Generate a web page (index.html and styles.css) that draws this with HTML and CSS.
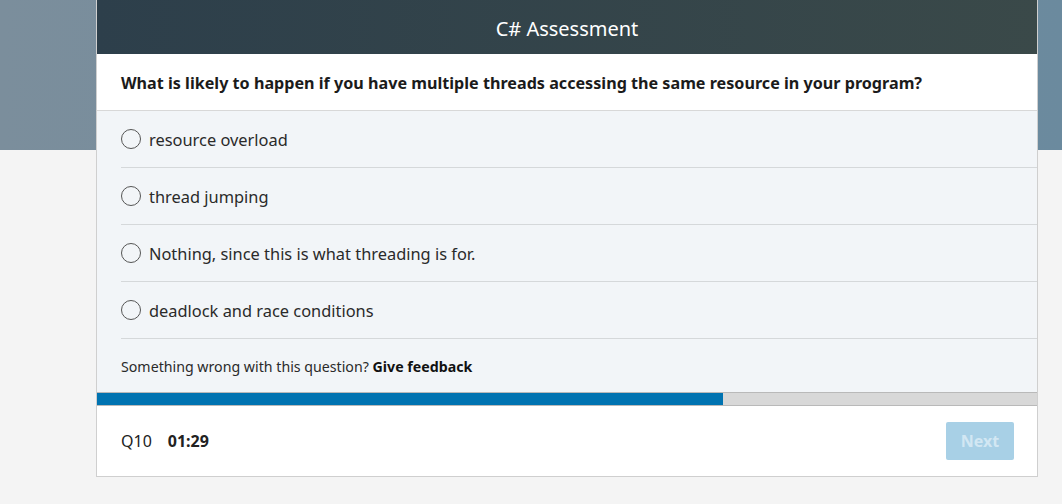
FILE: index.html
```html
<!DOCTYPE html>
<html lang="en">
<head>
<meta charset="utf-8">
<title>C# Assessment</title>
<link rel="stylesheet" href="styles.css">
</head>
<body>
<div class="band"></div>
<main class="card">
  <header class="card-head">C# Assessment</header>
  <div class="question">What is likely to happen if you have multiple threads accessing the same resource in your program?</div>
  <ul class="options">
    <li class="option"><span class="radio"></span><span class="label">resource overload</span></li>
    <li class="option"><span class="radio"></span><span class="label">thread jumping</span></li>
    <li class="option"><span class="radio"></span><span class="label">Nothing, since this is what threading is for.</span></li>
    <li class="option"><span class="radio"></span><span class="label">deadlock and race conditions</span></li>
  </ul>
  <div class="feedback">Something wrong with this question? <b>Give feedback</b></div>
  <div class="progress"><div class="progress-fill" style="width: 66.6%"></div></div>
  <footer class="card-foot">
    <span class="qnum">Q10</span>
    <span class="timer">01:29</span>
    <button class="next" disabled>Next</button>
  </footer>
</main>
</body>
</html>
```

FILE: styles.css
```css
html, body {
  margin: 0;
  padding: 0;
}
body {
  background: #f4f4f4;
  font-family: "Noto Sans", "Open Sans", sans-serif;
  color: #222;
  width: 1062px;
  height: 504px;
  overflow: hidden;
  position: relative;
}
.band {
  position: absolute;
  left: 0;
  top: 0;
  width: 100%;
  height: 150px;
  background: linear-gradient(90deg, #7b8e9c 0%, #6b8a9e 100%);
}
.card {
  position: relative;
  margin-left: 96px;
  width: 940px;
  border: 1px solid #cfcfcf;
  border-top: none;
  background: #fff;
}
.card-head {
  height: 54px;
  display: flex;
  align-items: center;
  justify-content: center;
  background: linear-gradient(90deg, #2d3f4b 0%, #3a4949 100%);
  color: #fff;
  font-size: 20px;
  padding-top: 3px;
  box-sizing: border-box;
}
.question {
  height: 57px;
  box-sizing: border-box;
  padding: 18px 24px 0;
  font-size: 16.15px;
  font-weight: 700;
  color: #1b1b1b;
  border-bottom: 1px solid #d8d8d8;
}
.options {
  list-style: none;
  margin: 0;
  padding: 0 0 0 24px;
  background: #f2f5f8;
}
.option {
  height: 57px;
  box-sizing: border-box;
  display: flex;
  align-items: center;
  border-bottom: 1px solid #d5d8da;
}
.radio {
  width: 18px;
  height: 18px;
  border: 1px solid #555;
  border-radius: 50%;
  flex: none;
}
.label {
  margin-left: 8px;
  font-size: 16.4px;
  color: #2a2a2a;
}
.feedback {
  height: 53px;
  box-sizing: border-box;
  padding: 18px 24px 0;
  font-size: 14.2px;
  color: #2a2a2a;
  background: #f2f5f8;
}
.feedback b {
  color: #111;
}
.progress {
  height: 12px;
  background: #d8d8d8;
  border-top: 1px solid #b9b9b9;
  border-bottom: 1px solid #b9b9b9;
}
.progress-fill {
  height: 100%;
  background: #0073b1;
}
.card-foot {
  height: 70px;
  box-sizing: border-box;
  display: flex;
  align-items: center;
  padding: 0 23px 0 24px;
}
.qnum {
  font-size: 16px;
  color: #222;
}
.timer {
  margin-left: 16px;
  font-size: 16px;
  font-weight: 700;
  color: #222;
}
.next {
  margin-left: auto;
  width: 68px;
  height: 38px;
  border: none;
  border-radius: 2px;
  background: #a8d0e6;
  color: #d2e7f3;
  font-family: inherit;
  font-size: 16px;
  font-weight: 700;
}
```
